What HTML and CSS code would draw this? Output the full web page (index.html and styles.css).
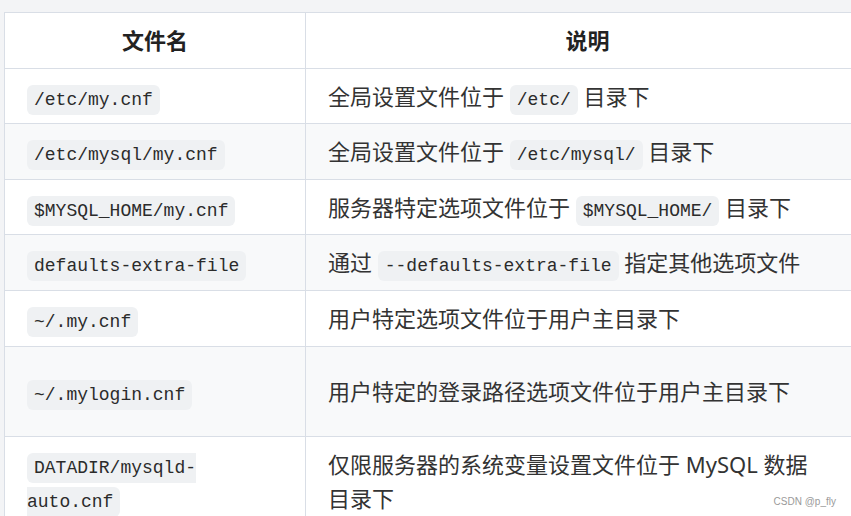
FILE: index.html
```html
<!DOCTYPE html>
<html lang="zh-CN">
<head>
<meta charset="utf-8">
<title>MySQL 配置文件</title>
<link rel="stylesheet" href="styles.css">
</head>
<body>
<div class="page">
  <table class="cfg">
    <thead>
      <tr><th class="c1">文件名</th><th class="c2">说明</th></tr>
    </thead>
    <tbody>
      <tr><td><code>/etc/my.cnf</code></td><td class="d">全局设置文件位于 <code>/etc/</code> 目录下</td></tr>
      <tr class="alt"><td><code>/etc/mysql/my.cnf</code></td><td class="d">全局设置文件位于 <code>/etc/mysql/</code> 目录下</td></tr>
      <tr><td><code>$MYSQL_HOME/my.cnf</code></td><td class="d">服务器特定选项文件位于 <code>$MYSQL_HOME/</code> 目录下</td></tr>
      <tr class="alt"><td><code>defaults-extra-file</code></td><td class="d">通过 <code>--defaults-extra-file</code> 指定其他选项文件</td></tr>
      <tr><td><code>~/.my.cnf</code></td><td class="d">用户特定选项文件位于用户主目录下</td></tr>
      <tr class="alt tall"><td><code>~/.mylogin.cnf</code></td><td class="d">用户特定的登录路径选项文件位于用户主目录下</td></tr>
      <tr><td><code>DATADIR/mysqld-auto.cnf</code></td><td class="d">仅限服务器的系统变量设置文件位于 MySQL 数据目录下</td></tr>
    </tbody>
  </table>
  <div class="mark">CSDN @p_fly</div>
</div>
</body>
</html>
```
FILE: styles.css
```css
html, body {
  margin: 0;
  padding: 0;
  background: #f3f4f6;
  overflow: hidden;
  width: 851px;
  height: 516px;
}
.page {
  padding: 12px 0 0 4px;
  position: relative;
  height: 504px;
}
.cfg {
  border-collapse: collapse;
  width: 866px;
  table-layout: fixed;
  background: #ffffff;
  font-family: "Noto Sans", "Noto Sans CJK SC", sans-serif;
  font-size: 22px;
  line-height: 34.6px;
  color: #333333;
}
.cfg th, .cfg td {
  border: 1px solid #d9dee6;
  padding: 10px 22px;
  text-align: left;
  vertical-align: middle;
}
.cfg td.d {
  padding-right: 48px;
}
.cfg th {
  text-align: center;
  font-weight: 700;
  color: #222222;
}
.c1 { width: 256px; }
.alt td { background: #f8f9fa; }
.tall td { height: 69px; }
code {
  font-family: "Liberation Mono", "DejaVu Sans Mono", monospace;
  font-size: 18px;
  line-height: 1;
  background: #eff1f3;
  border-radius: 6px;
  padding: 5px 7px;
  color: #2b2b2b;
}
.mark {
  position: absolute;
  right: 15px;
  bottom: 9px;
  font-family: "Liberation Sans", Arial, sans-serif;
  font-size: 10px;
  color: #9a9a9a;
}
```
